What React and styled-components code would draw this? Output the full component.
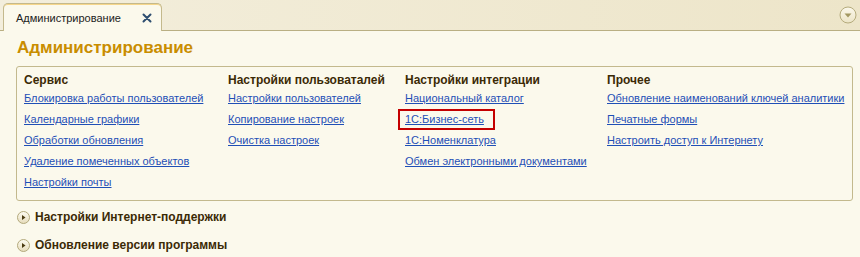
import styled, { createGlobalStyle } from "styled-components";

const GlobalStyle = createGlobalStyle`
    html, body {
        margin: 0;
        padding: 0;
        background: #fbf9ec;
        font-family: "Liberation Sans", Arial, sans-serif;
    }
`;

const Page = styled.div`
    width: 860px;
    height: 257px;
    overflow: hidden;
    background: #fbf9ec;
`;

const TabBar = styled.div`
    display: flex;
    align-items: flex-end;
    height: 30px;
    padding-left: 3px;
    padding-right: 3px;
    background: linear-gradient(to right, #f3eedc, #ede5c9);
    border-bottom: 1px solid #b9af83;
`;

const Tab = styled.div`
    display: flex;
    align-items: center;
    justify-content: space-between;
    box-sizing: border-box;
    width: 159px;
    height: 28px;
    margin-bottom: -1px;
    padding: 0 9px 0 12px;
    background: #fbf9ec;
    border: 1px solid #c4b98c;
    border-bottom: none;
    border-radius: 5px 5px 0 0;
    box-shadow: inset 0 1px 0 #f6d68a;
    font-size: 11px;
    color: #222;
`;

const MenuButton = styled.div`
    margin-left: auto;
    align-self: center;
    display: flex;
`;

const Content = styled.div`
    padding: 0 7px 0 16px;
`;

const Title = styled.h1`
    margin: 6px 0 7px 1px;
    font-size: 17px;
    line-height: 22px;
    font-weight: bold;
    color: #c98d00;
`;

const GroupBox = styled.div`
    display: grid;
    grid-template-columns: 204px 177px 202px 1fr;
    margin-bottom: 2px;
    padding: 6px 0 7px 7px;
    border: 1px solid #c3b98d;
    border-radius: 3px;
`;

const Column = styled.div`
    display: flex;
    flex-direction: column;
    align-items: flex-start;
`;

const Heading = styled.div`
    font-size: 12px;
    line-height: 15px;
    font-weight: bold;
    color: #3b2a06;
    white-space: nowrap;
`;

const Link = styled.a`
    display: inline-block;
    font-size: 11px;
    line-height: ${(p) => (p.$marked ? "17px" : "21px")};
    color: #1f4fb6;
    text-decoration: underline;
    white-space: nowrap;
    cursor: pointer;
    ${(p) =>
        p.$marked &&
        `
        border: 2px solid #c40000;
        padding: 0 9px 0 5px;
        margin-left: -7px;
    `}
`;

const Section = styled.div`
    display: flex;
    align-items: center;
    gap: 5px;
    height: 28px;
    padding-left: 1px;
    font-size: 12px;
    font-weight: bold;
    color: #3b2a06;
`;

function CloseIcon() {
    return (
        <svg width="10" height="10" viewBox="0 0 10 10">
            <path d="M1.5 1.5 L8.5 8.5 M8.5 1.5 L1.5 8.5" stroke="#2e4e70" strokeWidth="2" strokeLinecap="round" />
        </svg>
    );
}

function DropIcon() {
    return (
        <svg width="18" height="18" viewBox="0 0 18 18">
            <defs>
                <linearGradient id="dg" x1="0" y1="0" x2="0" y2="1">
                    <stop offset="0" stopColor="#fbf8ec" />
                    <stop offset="1" stopColor="#ece4c6" />
                </linearGradient>
            </defs>
            <circle cx="9" cy="9" r="8" fill="url(#dg)" stroke="#b5ab7c" strokeWidth="1" />
            <path d="M5.5 7.5 L12.5 7.5 L9 11.5 Z" fill="#a39862" />
        </svg>
    );
}

function ExpandIcon() {
    return (
        <svg width="13" height="13" viewBox="0 0 13 13">
            <defs>
                <linearGradient id="eg" x1="0" y1="0" x2="0" y2="1">
                    <stop offset="0" stopColor="#fdfbf2" />
                    <stop offset="1" stopColor="#e6dcbb" />
                </linearGradient>
            </defs>
            <circle cx="6.5" cy="6.5" r="6" fill="url(#eg)" stroke="#b3a97c" strokeWidth="1" />
            <path d="M5 4 L8.5 6.5 L5 9 Z" fill="#4a3a12" />
        </svg>
    );
}

const columns = [
    {
        title: "Сервис",
        links: [
            "Блокировка работы пользователей",
            "Календарные графики",
            "Обработки обновления",
            "Удаление помеченных объектов",
            "Настройки почты",
        ],
    },
    {
        title: "Настройки пользоваталей",
        links: ["Настройки пользователей", "Копирование настроек", "Очистка настроек"],
    },
    {
        title: "Настройки интеграции",
        links: [
            "Национальный каталог",
            "1С:Бизнес-сеть",
            "1С:Номенклатура",
            "Обмен электронными документами",
        ],
        marked: "1С:Бизнес-сеть",
    },
    {
        title: "Прочее",
        links: [
            "Обновление наименований ключей аналитики",
            "Печатные формы",
            "Настроить доступ к Интернету",
        ],
    },
];

export default function App() {
    return (
        <Page>
            <GlobalStyle />
            <TabBar>
                <Tab>
                    <span>Администрирование</span>
                    <CloseIcon />
                </Tab>
                <MenuButton>
                    <DropIcon />
                </MenuButton>
            </TabBar>
            <Content>
                <Title>Администрирование</Title>
                <GroupBox>
                    {columns.map((col) => (
                        <Column key={col.title}>
                            <Heading>{col.title}</Heading>
                            {col.links.map((l) => (
                                <Link key={l} $marked={col.marked === l}>
                                    {l}
                                </Link>
                            ))}
                        </Column>
                    ))}
                </GroupBox>
                <Section>
                    <ExpandIcon />
                    Настройки Интернет-поддержки
                </Section>
                <Section>
                    <ExpandIcon />
                    Обновление версии программы
                </Section>
            </Content>
        </Page>
    );
}
